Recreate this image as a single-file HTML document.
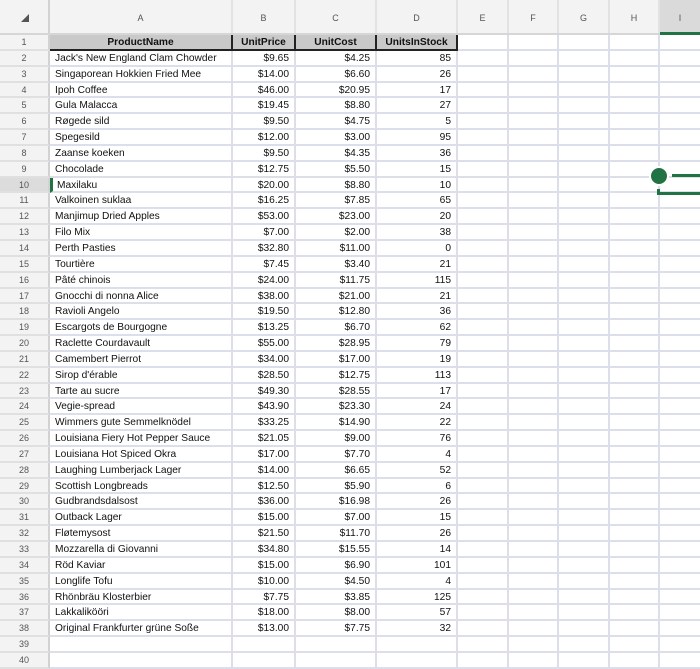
<!DOCTYPE html>
<html><head><meta charset="utf-8"><style>
*{box-sizing:border-box;margin:0;padding:0}
body{width:700px;height:660px;overflow:hidden;background:#fff;font-family:"Liberation Sans",sans-serif;font-size:10.2px;color:#111;position:relative}
.hdr{position:absolute;top:0;left:0;width:700px;height:35px;background:#f3f3f3;border-bottom:2px solid #d6d6d6}
.hdr div{position:absolute;top:0;height:33px;line-height:36px;text-align:center;color:#555;font-size:9px;border-right:2px solid #e2e2e2}
.rows{position:absolute;top:35px;left:0;width:700px}
.r{height:15.85px;display:flex;position:relative}
.r>div{height:15.85px;line-height:15px;border-right:2px solid #dcdfe9;border-bottom:2px solid #dcdfe9;white-space:nowrap;overflow:hidden}
.r>div:nth-child(1){width:50px;background:#f3f3f3;text-align:center;color:#555;font-size:9px;border-bottom-color:#e0e0e0;border-right:2px solid #d2d2d2}
.r>div:nth-child(2){width:183px;padding-left:5px}
.r>div:nth-child(3){width:63px;text-align:right;padding-right:5px}
.r>div:nth-child(4){width:81px;text-align:right;padding-right:5px}
.r>div:nth-child(5){width:81px;text-align:right;padding-right:5px}
.r>div:nth-child(6){width:51px}
.r>div:nth-child(7){width:50px}
.r>div:nth-child(8){width:51px}
.r>div:nth-child(9){width:50px}
.r>div:nth-child(10){width:40px;border-right:none}
.h>div:nth-child(n+2):nth-child(-n+5){background:#c9c9c9;font-weight:bold;text-align:center;padding:0;border-bottom:2px solid #222;border-right:2px solid #222}
.sel>div:nth-child(1){background:#dcdcdc}
</style></head><body>
<div class="hdr">
<div style="left:0;width:50px;border-right:2px solid #d2d2d2"></div>
<div style="left:50px;width:183px">A</div>
<div style="left:233px;width:63px">B</div>
<div style="left:296px;width:81px">C</div>
<div style="left:377px;width:81px">D</div>
<div style="left:458px;width:51px">E</div>
<div style="left:509px;width:50px">F</div>
<div style="left:559px;width:51px">G</div>
<div style="left:610px;width:50px">H</div>
<div style="left:660px;width:40px;background:#dadada;border-right:none;border-bottom:3px solid #217346;height:35px">I</div>
</div>
<div style="position:absolute;left:21px;top:14px;width:0;height:0;border-left:8px solid transparent;border-bottom:8px solid #555"></div>
<div class="rows">
<div class="r h"><div>1</div><div>ProductName</div><div>UnitPrice</div><div>UnitCost</div><div>UnitsInStock</div><div></div><div></div><div></div><div></div><div></div></div>
<div class="r"><div>2</div><div>Jack's New England Clam Chowder</div><div>$9.65</div><div>$4.25</div><div>85</div><div></div><div></div><div></div><div></div><div></div></div>
<div class="r"><div>3</div><div>Singaporean Hokkien Fried Mee</div><div>$14.00</div><div>$6.60</div><div>26</div><div></div><div></div><div></div><div></div><div></div></div>
<div class="r"><div>4</div><div>Ipoh Coffee</div><div>$46.00</div><div>$20.95</div><div>17</div><div></div><div></div><div></div><div></div><div></div></div>
<div class="r"><div>5</div><div>Gula Malacca</div><div>$19.45</div><div>$8.80</div><div>27</div><div></div><div></div><div></div><div></div><div></div></div>
<div class="r"><div>6</div><div>Røgede sild</div><div>$9.50</div><div>$4.75</div><div>5</div><div></div><div></div><div></div><div></div><div></div></div>
<div class="r"><div>7</div><div>Spegesild</div><div>$12.00</div><div>$3.00</div><div>95</div><div></div><div></div><div></div><div></div><div></div></div>
<div class="r"><div>8</div><div>Zaanse koeken</div><div>$9.50</div><div>$4.35</div><div>36</div><div></div><div></div><div></div><div></div><div></div></div>
<div class="r"><div>9</div><div>Chocolade</div><div>$12.75</div><div>$5.50</div><div>15</div><div></div><div></div><div></div><div></div><div></div></div>
<div class="r sel"><div>10</div><div style="border-left:3px solid #217346;padding-left:4px">Maxilaku</div><div>$20.00</div><div>$8.80</div><div>10</div><div></div><div></div><div></div><div></div><div></div></div>
<div class="r"><div>11</div><div>Valkoinen suklaa</div><div>$16.25</div><div>$7.85</div><div>65</div><div></div><div></div><div></div><div></div><div></div></div>
<div class="r"><div>12</div><div>Manjimup Dried Apples</div><div>$53.00</div><div>$23.00</div><div>20</div><div></div><div></div><div></div><div></div><div></div></div>
<div class="r"><div>13</div><div>Filo Mix</div><div>$7.00</div><div>$2.00</div><div>38</div><div></div><div></div><div></div><div></div><div></div></div>
<div class="r"><div>14</div><div>Perth Pasties</div><div>$32.80</div><div>$11.00</div><div>0</div><div></div><div></div><div></div><div></div><div></div></div>
<div class="r"><div>15</div><div>Tourtière</div><div>$7.45</div><div>$3.40</div><div>21</div><div></div><div></div><div></div><div></div><div></div></div>
<div class="r"><div>16</div><div>Pâté chinois</div><div>$24.00</div><div>$11.75</div><div>115</div><div></div><div></div><div></div><div></div><div></div></div>
<div class="r"><div>17</div><div>Gnocchi di nonna Alice</div><div>$38.00</div><div>$21.00</div><div>21</div><div></div><div></div><div></div><div></div><div></div></div>
<div class="r"><div>18</div><div>Ravioli Angelo</div><div>$19.50</div><div>$12.80</div><div>36</div><div></div><div></div><div></div><div></div><div></div></div>
<div class="r"><div>19</div><div>Escargots de Bourgogne</div><div>$13.25</div><div>$6.70</div><div>62</div><div></div><div></div><div></div><div></div><div></div></div>
<div class="r"><div>20</div><div>Raclette Courdavault</div><div>$55.00</div><div>$28.95</div><div>79</div><div></div><div></div><div></div><div></div><div></div></div>
<div class="r"><div>21</div><div>Camembert Pierrot</div><div>$34.00</div><div>$17.00</div><div>19</div><div></div><div></div><div></div><div></div><div></div></div>
<div class="r"><div>22</div><div>Sirop d'érable</div><div>$28.50</div><div>$12.75</div><div>113</div><div></div><div></div><div></div><div></div><div></div></div>
<div class="r"><div>23</div><div>Tarte au sucre</div><div>$49.30</div><div>$28.55</div><div>17</div><div></div><div></div><div></div><div></div><div></div></div>
<div class="r"><div>24</div><div>Vegie-spread</div><div>$43.90</div><div>$23.30</div><div>24</div><div></div><div></div><div></div><div></div><div></div></div>
<div class="r"><div>25</div><div>Wimmers gute Semmelknödel</div><div>$33.25</div><div>$14.90</div><div>22</div><div></div><div></div><div></div><div></div><div></div></div>
<div class="r"><div>26</div><div>Louisiana Fiery Hot Pepper Sauce</div><div>$21.05</div><div>$9.00</div><div>76</div><div></div><div></div><div></div><div></div><div></div></div>
<div class="r"><div>27</div><div>Louisiana Hot Spiced Okra</div><div>$17.00</div><div>$7.70</div><div>4</div><div></div><div></div><div></div><div></div><div></div></div>
<div class="r"><div>28</div><div>Laughing Lumberjack Lager</div><div>$14.00</div><div>$6.65</div><div>52</div><div></div><div></div><div></div><div></div><div></div></div>
<div class="r"><div>29</div><div>Scottish Longbreads</div><div>$12.50</div><div>$5.90</div><div>6</div><div></div><div></div><div></div><div></div><div></div></div>
<div class="r"><div>30</div><div>Gudbrandsdalsost</div><div>$36.00</div><div>$16.98</div><div>26</div><div></div><div></div><div></div><div></div><div></div></div>
<div class="r"><div>31</div><div>Outback Lager</div><div>$15.00</div><div>$7.00</div><div>15</div><div></div><div></div><div></div><div></div><div></div></div>
<div class="r"><div>32</div><div>Fløtemysost</div><div>$21.50</div><div>$11.70</div><div>26</div><div></div><div></div><div></div><div></div><div></div></div>
<div class="r"><div>33</div><div>Mozzarella di Giovanni</div><div>$34.80</div><div>$15.55</div><div>14</div><div></div><div></div><div></div><div></div><div></div></div>
<div class="r"><div>34</div><div>Röd Kaviar</div><div>$15.00</div><div>$6.90</div><div>101</div><div></div><div></div><div></div><div></div><div></div></div>
<div class="r"><div>35</div><div>Longlife Tofu</div><div>$10.00</div><div>$4.50</div><div>4</div><div></div><div></div><div></div><div></div><div></div></div>
<div class="r"><div>36</div><div>Rhönbräu Klosterbier</div><div>$7.75</div><div>$3.85</div><div>125</div><div></div><div></div><div></div><div></div><div></div></div>
<div class="r"><div>37</div><div>Lakkalikööri</div><div>$18.00</div><div>$8.00</div><div>57</div><div></div><div></div><div></div><div></div><div></div></div>
<div class="r"><div>38</div><div>Original Frankfurter grüne Soße</div><div>$13.00</div><div>$7.75</div><div>32</div><div></div><div></div><div></div><div></div><div></div></div>
<div class="r"><div>39</div><div></div><div></div><div></div><div></div><div></div><div></div><div></div><div></div><div></div></div>
<div class="r"><div>40</div><div></div><div></div><div></div><div></div><div></div><div></div><div></div><div></div><div></div></div>
</div>
<div style="position:absolute;left:649px;top:166px;width:20px;height:20px;border-radius:50%;background:#217346;border:2px solid #fff"></div>
<div style="position:absolute;left:672px;top:174px;width:28px;height:3px;background:#217346"></div>
<div style="position:absolute;left:657px;top:189px;width:3px;height:6px;background:#217346"></div>
<div style="position:absolute;left:657px;top:192px;width:43px;height:3px;background:#217346"></div>
</body></html>
